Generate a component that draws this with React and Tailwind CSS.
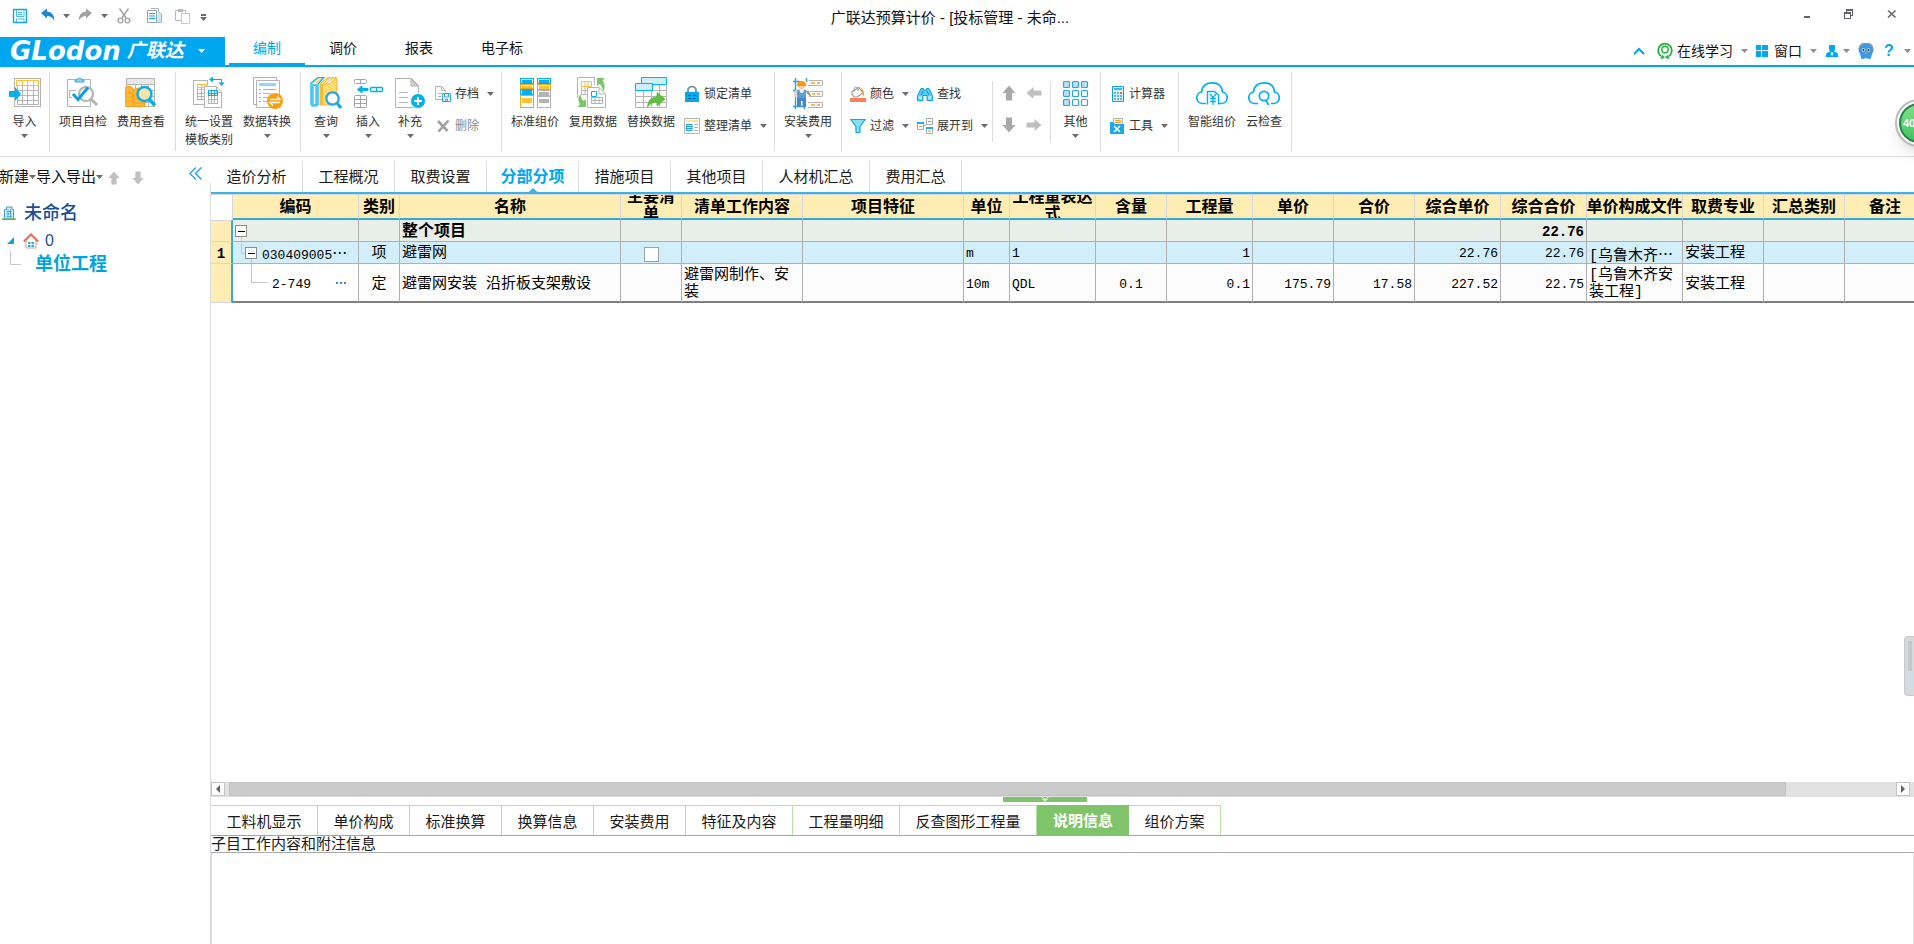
import React from "react";

const GRAY = "#b4b4b4";
const CYAN = "#00b0f0";
const GOLD = "#ffc233";

function Svg({ w = 32, h = 32, crisp, children }) {
  return (
    <svg width={w} height={h} viewBox={`0 0 ${w} ${h}`} fill="none" aria-hidden="true" className="block shrink-0" shapeRendering={crisp ? "crispEdges" : "auto"}>
      {children}
    </svg>
  );
}

function Caret({ color = "#6b6b78" }) {
  return (
    <svg width="7" height="4" viewBox="0 0 7 4" aria-hidden="true" className="block shrink-0">
      <path d="M0 0H7L3.5 4Z" fill={color} />
    </svg>
  );
}

/* ---------- ribbon icons, 32px ---------- */

const ImportIcon = () => (
  <Svg crisp>
    <path d="M5.500 1.500H31.500V29.500H5.500Z" stroke={GRAY} />
    <path d="M8.500 9V27.500H29.500V9M8.500 13.500H29M8.500 18.500H29M8.500 23.500H29M13.500 9V27M18.500 9V27M24.500 9V27" stroke={GRAY} />
    <path d="M7.500 3.500H29.500V8.500H7.500ZM13.500 3V8M18.500 3V8M24.500 3V8" stroke={GOLD} />
    <path d="M0 14H6V10L12 17L6 24V20H0Z" fill={CYAN} shapeRendering="auto" />
  </Svg>
);

const CheckIcon = () => (
  <Svg>
    <path d="M.5 2.500H23.500V29.500H.5Z" stroke={GRAY} />
    <path d="M8 5V3H10A2.600 2.600 0 0 1 15 3H17V5Z" fill="#8fd8f5" stroke="#3aa9d8" />
    <path d="M9 13.500H2.500V20.500H5" stroke={GRAY} />
    <circle cx="19" cy="17" r="7" stroke={GRAY} strokeWidth="2.200" fill="#fff" />
    <path d="M24 22L30 28" stroke={GRAY} strokeWidth="3" />
    <path d="M6 17L11 22.500L21 10.500" stroke="#0c9fe0" strokeWidth="3" />
  </Svg>
);

const FeeIcon = () => (
  <Svg>
    <path d="M1.500 1.500H29.500V29.500H1.500Z" stroke={GRAY} />
    <path d="M2 2H29V7H2Z" fill="#e9e9e9" />
    <path d="M1 7.500H30M8 13.500H29M8 19.500H29M8 25.500H29M10.500 8V29M16.500 8V29M23.500 8V29" stroke={GRAY} />
    <path d="M0 11Q4 7.500 8 11V29Q4 31 0 29Z" fill="#ffb833" stroke="#f5a11a" />
    <path d="M8 13Q14 9 20 13V29Q14 31 8 29Z" fill="#ffb833" stroke="#f5a11a" />
    <path d="M0 16H8M0 20H8M0 24H8M8 18H20M8 22H20M8 26H20" stroke="#f5a11a" />
    <circle cx="19.500" cy="17" r="7" fill="#ffe3a6" stroke={CYAN} strokeWidth="2.400" />
    <path d="M24.500 22.500L30 28.500" stroke={CYAN} strokeWidth="3.400" />
  </Svg>
);

const TemplateIcon = () => (
  <Svg crisp>
    <path d="M11 27.500H.5V3.500H14.500V8" stroke={GRAY} />
    <path d="M4.500 7.500H13.500V12.500H4.500ZM4 10.500H14M8.500 7V13M11.500 7V13" stroke={GOLD} />
    <path d="M4.500 13V23M4 16.500H11M4 19.500H11M4 22.500H11M8.500 13V23" stroke={GRAY} />
    <path d="M11.500 9.500H23.500L28.500 15V30.500H11.500Z" fill="#fff" stroke={GRAY} shapeRendering="auto" />
    <path d="M23.500 10V15.500H28" stroke={GRAY} />
    <path d="M15.500 13.500H24.500V18.500H15.500ZM15 16.500H25M18.500 13V19M21.500 13V19" stroke={CYAN} />
    <path d="M15.500 19V26.500H24.500V19M15 22.500H25M18.500 19V26M21.500 19V26" stroke={GRAY} />
    <path d="M18 2.500H28.500V6" stroke={CYAN} />
    <path d="M16 2.500L20 -.5V5.500ZM25.500 5.500H31.500L28.500 9Z" fill={CYAN} shapeRendering="auto" />
  </Svg>
);

const ConvertIcon = () => (
  <Svg>
    <path d="M5 27.500H2.500V.5H25.500V3" stroke={GRAY} />
    <path d="M5.500 3.500H28.500V30.500H5.500Z" stroke={GRAY} fill="#fff" />
    <path d="M8 6H25V9H8Z" fill="#8ddcf7" />
    <path d="M8 12.500H10M12 12.500H25M8 16.500H10M12 16.500H20M8 20.500H10M12 20.500H17M8 24.500H10M12 24.500H16" stroke={GRAY} />
    <circle cx="24" cy="24" r="8" fill="#fb9e0c" />
    <path d="M19 22.500H29L26 19.500M29 25.500H19L22 28.500" stroke="#fff" strokeWidth="1.500" />
  </Svg>
);

const QueryIcon = () => (
  <Svg>
    <path d="M1 6L8 .5H14L8 7V28L6 29H2L1 27Z" fill="#fff" stroke={CYAN} strokeWidth="1.200" />
    <path d="M1 7H8V27Q8 29 4.500 29T1 27Z" fill="#4cc6f2" />
    <path d="M4.500 9V27" stroke="#fff" strokeWidth="1.500" />
    <path d="M3 6L9 .8M6 6L12 .8" stroke="#f5a623" />
    <path d="M10 7L17 1H27V22L20 28H10Z" fill="#ffdc6b" stroke="#f7b52c" />
    <path d="M10 7H19L26 1H18Z" fill="#fff" stroke="#f7b52c" />
    <path d="M13 6.500L20 1M16 6.500L23 1" stroke="#f7b52c" />
    <path d="M10 7.500H13V28H10Z" fill="#f9bd35" />
    <circle cx="22.500" cy="21.500" r="6.200" fill="#fff" stroke="#1ea8e6" strokeWidth="2.200" />
    <path d="M27 26L31 31" stroke="#1ea8e6" strokeWidth="3.200" />
  </Svg>
);

const InsertIcon = () => (
  <Svg>
    <rect x="2.500" y="2.500" width="12" height="4" rx="1" stroke="#a4a4a4" />
    <path d="M8.500 2.500V6.500" stroke="#a4a4a4" />
    <path d="M16 11.500H10V9L5.500 12.500L10 16V13.500H16Z" fill={CYAN} stroke={CYAN} />
    <rect x="18.500" y="10.500" width="12" height="4" rx="1" stroke={CYAN} strokeWidth="1.400" />
    <path d="M24.500 10.500V14.500" stroke={CYAN} />
    <rect x="2.500" y="18.500" width="12" height="12" rx="1" stroke="#a4a4a4" />
    <path d="M8.500 18V30M2 22.500H15M2 26.500H15" stroke="#a4a4a4" />
  </Svg>
);

const AddPageIcon = () => (
  <Svg>
    <path d="M1.500 1.500H17.500L24.500 8.500V30.500H1.500Z" fill="#fff" stroke={GRAY} />
    <path d="M17 2V9H24Z" fill="#d0d0d0" stroke={GRAY} />
    <path d="M5 15.500H14M5 20.500H14M5 25.500H14" stroke={GRAY} />
    <circle cx="24" cy="24" r="7.500" fill={CYAN} stroke="#fff" />
    <path d="M20 24H28M24 20V28" stroke="#fff" strokeWidth="2" />
  </Svg>
);

const StandardIcon = () => (
  <Svg crisp>
    <path d="M1.500 1.500H14.500V6.500H1.500ZM18.500 1.500H31.500V6.500H18.500ZM1.500 12.500H14.500V17.500H1.500Z" stroke={CYAN} />
    <path d="M3 3H13V6H3ZM20 3H30V6H20ZM3 13H13V17H3Z" fill={CYAN} />
    <path d="M1.500 7.500H14.500V11.500H1.500ZM18.500 7.500H31.500V12.500H18.500ZM1.500 18.500H14.500V30.500H1.500Z" stroke="#f6a316" />
    <path d="M3 9H13V11H3ZM20 9H30V12H20ZM3 21H13V26H3Z" fill={GOLD} />
    <path d="M18.500 13.500H31.500V18.500H18.500ZM18.500 19.500H31.500V30.500H18.500Z" stroke={GRAY} />
    <path d="M20 15H30V18H20ZM20 22H30V26H20Z" fill={GRAY} />
  </Svg>
);

const ReuseIcon = () => (
  <Svg>
    <path d="M18 .5H.5V21M17.500 1V8" stroke={GRAY} />
    <path d="M4.500 4.500H14.500V9.500H4.500ZM8 4V9M11 4V9" stroke={GOLD} />
    <path d="M4.500 10V17.500H10M4 13.500H10M8 10V17" stroke={GRAY} />
    <path d="M10.500 10.500H22L28.500 17V30.500H10.500Z" fill="#fff" stroke={GRAY} />
    <path d="M22 10.500V17H28.500" stroke={GRAY} />
    <path d="M14.500 14.500H19.500V19.500H14.500Z" stroke={CYAN} />
    <path d="M14.500 20V26.500H25.500V20.500M14 20.500H26M14 23.500H26M18 20V26M22 20V26" stroke={GRAY} />
    <path d="M28 1H20V9L22.500 7Q25.500 9 26 15Q29.500 8 25.500 3.500Z" fill="#7cc46a" />
    <path d="M0 30H9V22L6.500 24Q4 22 3.500 17Q-.5 22 3 27.500Z" fill="#7cc46a" />
  </Svg>
);

const ReplaceIcon = () => (
  <Svg>
    <path d="M.5 13.500V30.500H31.500V8.500" stroke={GRAY} />
    <path d="M.5 19.500H31M.5 25.500H31M17 13.500H31M8.500 13V30M16.500 9V30M24.500 8V30" stroke={GRAY} />
    <path d="M6.500 .5H31.500V7.500H6.500Z" fill="#cdeffb" stroke={CYAN} />
    <path d="M.5 6.500H17.500V13.500H.5Z" fill="#cdeffb" stroke={CYAN} />
    <path d="M12.500 30Q13 20 22 20V15.500L30 22L22 29V25Q16 25 12.500 30Z" fill="#5cc43c" stroke="#45aa28" strokeWidth=".6" />
  </Svg>
);

const InstallIcon = () => (
  <Svg>
    <path d="M3.500 1V32M14.500 1V5M12.500 28V32M1 4.500H8M1 13.500H6M1 29.500H12" stroke="#22a9dc" strokeWidth="1.400" />
    <path d="M17 3.500H30.500V8.500H16M18 14.500H30.500V19.500H17M16 25.500H30.500V30.500H16" stroke={GRAY} />
    <path d="M19 6H23M25 6H28M20 17H23M25 17H28M19 28H23M25 28H28" stroke="#f6a316" strokeWidth="1.400" />
    <circle cx="9.500" cy="8.500" r="3.600" fill="#f6cba2" />
    <path d="M5 8Q5 4 9.500 4T14 8L15 9H5Z" fill="#fa981b" />
    <path d="M5 13Q9.500 11 14 13V22H5Z" fill="#5b9fd8" />
    <path d="M7 12L8.500 16H11L12.500 12Z" fill="#e9eef3" />
    <path d="M5 21H14V30H10.500V24H9V30H5Z" fill="#4a86c4" />
    <path d="M14 14L17.500 18M16 14L18.500 19" stroke="#9a9a9a" strokeWidth="1.600" />
    <path d="M4.500 13L3 20" stroke="#f6cba2" strokeWidth="2" />
  </Svg>
);

const OtherIcon = () => (
  <Svg>
    {[4, 13, 22].map((y) =>
      [4, 13, 22].map((x) => (
        <rect key={`${x}-${y}`} x={x - 0.5} y={y + 0.5} width="6" height="6" rx="1" stroke="#22aadd" strokeWidth="1.200" fill={x === 4 || y === 4 ? "#c2dcf2" : "#fff"} />
      ))
    )}
  </Svg>
);

const CLOUD = "M10 26.500H6.500A5.800 5.800 0 0 1 5.500 15Q6.500 6 16 5.800T26.500 15A5.800 5.800 0 0 1 25.500 26.500H23";

const CloudPriceIcon = () => (
  <Svg>
    <path d={CLOUD} stroke={CYAN} strokeWidth="1.700" />
    <path d="M11.500 27.500V14.500H18.500L22.500 18V27.500" stroke={CYAN} strokeWidth="1.400" />
    <path d="M14 17L17 20.500L20 17M17 20.500V28M14 21.500H20M14 24.500H20" stroke={CYAN} strokeWidth="1.300" />
  </Svg>
);

const CloudCheckIcon = () => (
  <Svg>
    <path d={CLOUD} stroke={CYAN} strokeWidth="1.700" />
    <circle cx="16" cy="19" r="4.700" stroke={CYAN} strokeWidth="1.700" />
    <path d="M18 23L20.500 28" stroke={CYAN} strokeWidth="1.700" />
  </Svg>
);

/* ---------- small icons, 16px ---------- */

const ArchiveIcon = () => (
  <Svg w={16} h={16}>
    <path d="M7 13.500H.5V.5H6.500L10.500 4.500V6M6.500 .5V4.500H10.500M3 7.500H7M3 10.500H6" stroke={GRAY} />
    <path d="M7.500 7.500H15.500V15.500H7.500Z" fill="#fff" stroke="#2ca5d8" />
    <path d="M9.500 8V11H13.500V8M10.500 15V13H12.500V15" stroke="#2ca5d8" />
  </Svg>
);
const DeleteIcon = () => (
  <Svg w={16} h={16}>
    <path d="M3 3L12.500 13M13.500 2.500L3.500 13.500" stroke="#a0a0a0" strokeWidth="2.600" />
  </Svg>
);
const LockIcon = () => (
  <Svg w={16} h={16}>
    <path d="M4 7V4.500A4 4 0 0 1 12 4.500V7" stroke="#8494a0" strokeWidth="2" />
    <path d="M1 6H15V16H1Z" fill="#05a9ee" />
    <path d="M4 9.500H7M9 9.500H12M4 12.500H7M9 12.500H12" stroke="#0b5d94" strokeWidth="1.200" />
  </Svg>
);
const ArrangeIcon = () => (
  <Svg w={16} h={16}>
    <path d="M.5 .5H15.500V15.500H.5Z" stroke={GRAY} />
    <path d="M2 2H14V4H2Z" fill="#ffe3a0" />
    <path d="M2.500 6.500H8V12.500H2.500ZM3 8.500H8M3 10.500H8" stroke="#159fda" />
    <path d="M10 6.500H14M10 9.500H14M10 12.500H14" stroke={GRAY} />
  </Svg>
);
const ColorIcon = () => (
  <Svg w={16} h={16}>
    <path d="M2 5.500L9 1.500L13 7L7 11H4L2 8Z" fill="#fff" stroke="#9b9b9b" strokeWidth="1.200" />
    <path d="M4 6V2.500Q5.500 -.5 8 2.500V5" stroke="#9b9b9b" />
    <path d="M11 2Q15 4 13.500 11Q12.500 8 12 6Z" fill="#f39b24" />
    <path d="M0 12H16V16H0Z" fill="#ff7f56" />
  </Svg>
);
const FilterIcon = () => (
  <Svg w={16} h={16}>
    <path d="M.8 1.500H15.200L10 8.500V14.500H6V8.500Z" fill="#8bdcf7" stroke="#12a6e4" strokeWidth="1.200" />
  </Svg>
);
const FindIcon = () => (
  <Svg w={16} h={16}>
    <path d="M4 2.500H6.500V4H9.500V2.500H12L15.500 9.500V14.500H10V9.500H6V14.500H.5V9.500Z" fill="#54cdf5" stroke="#159fda" />
    <path d="M6 5L4 9M10 5L12 9" stroke="#0f8fc6" />
    <path d="M1.500 10H5V13.500H1.500ZM11 10H14.500V13.500H11Z" fill="#a4e8fc" />
  </Svg>
);
const ExpandIcon = () => (
  <Svg w={16} h={16}>
    <path d="M.5 4.500H6.500V11.500H.5ZM9.500 .5H15.500V6.500H9.500ZM9.500 9.500H15.500V15.500H9.500Z" stroke="#a9a9a9" fill="#fff" />
    <path d="M0 4H7V6H0ZM9 9H16V11H9Z" fill="#19aaf0" />
    <path d="M2 8.500H5M11 3.500H14M11 13H14" stroke="#c59a4a" />
    <path d="M7 7.500H9" stroke="#a9a9a9" />
  </Svg>
);
const CalculatorIcon = () => (
  <Svg w={16} h={16}>
    <path d="M3.500 .5H14.500V15.500H3.500Z" fill="#d4f1fc" stroke="#159fda" />
    <path d="M5 3H13" stroke="#159fda" strokeWidth="1.500" />
    <path d="M5 7H7M8 7H10M5 10H7M8 10H10M11 10H13M5 13H7M8 13H10M11 13H13" stroke="#4a9fc8" strokeWidth="1.400" />
    <path d="M11 6H13V8H11Z" fill="#ff5548" />
  </Svg>
);
const ToolIcon = () => (
  <Svg w={16} h={16}>
    <path d="M4.500 .5H13.500V7H4.500Z" fill="#fff" stroke={GRAY} />
    <path d="M6 2.500H12M6 4.500H12" stroke="#f2ab2c" strokeWidth="1.400" />
    <path d="M1 4H4L6 6H15V16H1Z" fill="#18a9ec" />
    <path d="M5 8L11 14M11 8L5 14" stroke="#fff" strokeWidth="1.500" />
  </Svg>
);

function Arrow({ dir, color = "#b4b4b4", w = 16 }) {
  const d = {
    up: "M8 .5L14.500 8H11V15.500H5V8H1.500Z",
    down: "M8 15.500L14.500 8H11V.5H5V8H1.500Z",
    left: "M.5 8L7.500 2V5.500H15.500V10.500H7.500V14Z",
    right: "M15.500 8L8.500 2V5.500H.5V10.500H8.500V14Z",
  }[dir];
  return (
    <svg width={w} height={w} viewBox="0 0 16 16" aria-hidden="true" className="block shrink-0">
      <path d={d} fill={color} />
    </svg>
  );
}

/* ---------- title bar ---------- */

const quickButton = "flex h-full w-7 items-center justify-center";
const quickCaret = "flex h-full w-2.5 items-center justify-center";

function TitleBar() {
  return (
    <header className="flex h-[37px] shrink-0 items-start">
      <div className="flex h-8 w-[210px] shrink-0 pl-1.5">
        <button aria-label="保存" className={quickButton}>
          <Svg w={16} h={16}>
            <path d="M1.500 1.500H14.500V14.500H1.500Z" stroke="#12a6e4" strokeWidth="1.400" />
            <path d="M4.500 2V8.500H12V2M4.500 14V11H12V14M6 4.500H10.500M6 6.500H10.500" stroke="#4cbce6" />
          </Svg>
        </button>
        <button aria-label="撤销" className={quickButton}>
          <Svg w={16} h={16}>
            <path d="M1 5L7 .5V3.500Q14.500 4 14.500 13.500Q12.500 8 7 8V10.500Z" fill="#1e86d0" />
          </Svg>
        </button>
        <button aria-label="撤销列表" className={quickCaret}><Caret /></button>
        <button aria-label="重做" className={quickButton}>
          <Svg w={16} h={16}>
            <path d="M15 5L9 .5V3.500Q1.500 4 1.500 13.500Q3.500 8 9 8V10.500Z" fill="#a2a2a2" />
          </Svg>
        </button>
        <button aria-label="重做列表" className={quickCaret}><Caret /></button>
        <button aria-label="剪切" className="flex h-full w-[30px] items-center justify-center">
          <Svg w={16} h={16}>
            <path d="M3.500 .5L10 10M12.500 .5L6 10" stroke="#a2a2a2" strokeWidth="1.500" />
            <circle cx="4.500" cy="12.500" r="2.400" stroke="#a2a2a2" strokeWidth="1.300" />
            <circle cx="11.500" cy="12.500" r="2.400" stroke="#a2a2a2" strokeWidth="1.300" />
          </Svg>
        </button>
        <button aria-label="复制" className="flex h-full w-[30px] items-center justify-center">
          <Svg w={16} h={16}>
            <path d="M5 .5H12.500V12.500H5" stroke={GRAY} />
            <path d="M12 3L15.500 6.500V14.500H11" fill="#bfe9fa" stroke={GRAY} />
            <path d="M1.500 2.500H10.500V14.500H1.500Z" fill="#fff" stroke="#8fa6b2" />
            <path d="M3 5.500H9M3 8H9M3 10.500H9" stroke="#12a6e4" />
          </Svg>
        </button>
        <button aria-label="粘贴" className={quickButton}>
          <Svg w={16} h={16}>
            <path d="M7 12.500H1.500V2.500H11.500V5" stroke="#b8b8b8" />
            <path d="M4 1H9V4H4Z" fill="#b8b8b8" />
            <path d="M7.500 5.500H15.500V15.500H7.500Z" fill="#fff" stroke="#c8c8c8" />
          </Svg>
        </button>
        <button aria-label="自定义快速访问" className="flex h-full w-3.5 flex-col items-center justify-center gap-px pt-0.5">
          <span className="h-0.5 w-[5px] bg-[#6b6b78]" />
          <Caret />
        </button>
      </div>
      <h1 className="min-w-0 flex-1 truncate pt-2 text-center text-[15px] leading-5 text-[#111]">广联达预算计价 - [投标管理 - 未命...</h1>
      <div className="flex h-7 w-[224px] shrink-0 justify-end text-[#62626c]">
        <button aria-label="最小化" className="flex w-[42px] items-center justify-center pt-1.5">
          <span className="h-[2px] w-1.5 bg-[#62626c]" />
        </button>
        <button aria-label="还原" className="flex w-[42px] items-center justify-center">
          <Svg w={10} h={10} crisp>
            <path d="M2.500 3V.5H8.500V6.500H7M.5 3.500H6.500V9.500H.5ZM2 1.500H9M0 4.500H7" stroke="#62626c" />
          </Svg>
        </button>
        <button aria-label="关闭" className="flex w-[44px] items-center justify-center">
          <Svg w={10} h={10}>
            <path d="M1 1.500L8.500 8.500M8.500 1.500L1 8.500" stroke="#62626c" strokeWidth="1.500" />
          </Svg>
        </button>
      </div>
    </header>
  );
}

/* ---------- menu bar ---------- */

const menuTabs = [
  { label: "编制", active: true },
  { label: "调价" },
  { label: "报表" },
  { label: "电子标" },
];

function MenuBar() {
  return (
    <nav className="flex h-[30px] shrink-0 border-b-2 border-[#00a6ee]">
      <button className="mr-1 flex w-[225px] shrink-0 items-center bg-[#00a6ee] pl-2.5 text-white">
        <span className="font-['DejaVu_Sans',sans-serif] text-[26px] leading-7 font-bold italic">GLodon</span>
        <span className="ml-1.5 text-[19px] leading-7 font-bold italic">广联达</span>
        <span className="ml-3.5"><Caret color="#fff" /></span>
      </button>
      {menuTabs.map((t) => (
        <a
          key={t.label}
          href="#"
          className={
            t.active
              ? "border-b-2 border-[#00a6ee] px-6 text-sm leading-[22px] text-[#00a6ee]"
              : "px-6 text-sm leading-[22px] text-[#111]"
          }
        >
          {t.label}
        </a>
      ))}
      <div className="ml-auto flex items-center gap-2 pr-[3px] text-sm leading-5 text-[#111]">
        <button aria-label="折叠功能区" className="pr-1">
          <Svg w={12} h={8}>
            <path d="M1 7L6 2L11 7" stroke="#00a6ee" strokeWidth="2" />
          </Svg>
        </button>
        <button className="flex items-center gap-1">
          <Svg w={16} h={16}>
            <circle cx="8" cy="7.500" r="6.800" stroke="#22ac38" strokeWidth="1.800" />
            <circle cx="8" cy="6.500" r="3.200" stroke="#22ac38" strokeWidth="1.400" />
            <path d="M3 16L5 11.500L8 14L11 11.500L13 16H10L8 14L6 16Z" fill="#22ac38" stroke="#fff" strokeWidth=".6" />
          </Svg>
          在线学习
        </button>
        <Caret color="#8c8c96" />
        <button className="flex items-center gap-1.5">
          <Svg w={12} h={12} crisp>
            <path d="M0 0H5V5H0ZM6 0H12V5H6ZM0 6H5V12H0ZM6 6H12V12H6Z" fill="#00a6ee" />
          </Svg>
          窗口
        </button>
        <Caret color="#8c8c96" />
        <button aria-label="用户" className="flex items-center gap-1">
          <Svg w={14} h={14}>
            <path d="M4 1H10V5.500L9 7.500L12.500 9L13.500 13H.5L1.500 9L5 7.500L4 5.500Z" fill="#00a6ee" />
            <path d="M5.500 8.500L7 12.500L8.500 8.500" fill="#fff" />
          </Svg>
          <Caret color="#8c8c96" />
        </button>
        <button aria-label="助手">
          <Svg w={16} h={16}>
            <path d="M.5 7.500A7.500 7 0 0 1 15.500 7.500L13.500 12.500Q12 15.500 8 15.500T2.500 12.500Z" fill="#3a9ae8" />
            <path d="M3.500 13L5 16M12.500 13L11 16" stroke="#3a9ae8" strokeWidth="2.400" />
            <path d="M1 6A7 6 0 0 1 15 6" stroke="#8899aa" strokeWidth="1.400" />
            <circle cx="5.500" cy="7" r="1.800" fill="#d8ecff" />
            <circle cx="10.500" cy="7" r="1.800" fill="#d8ecff" />
            <circle cx="5.500" cy="7" r="1" fill="#1b2b3d" />
            <circle cx="10.500" cy="7" r="1" fill="#1b2b3d" />
            <path d="M6.800 9.500H9.200L8 11.500Z" fill="#ffb020" />
          </Svg>
        </button>
        <button aria-label="帮助" className="w-3.5 text-center text-base font-bold text-[#00a6ee]">?</button>
        <Caret color="#8c8c96" />
      </div>
    </nav>
  );
}

/* ---------- ribbon ---------- */

const W = { sm: "w-[42px]", md: "w-[46px]", full: "w-[49px]", lg: "w-[58px]" };

function BigButton({ icon, label, label2, caret, size = "lg" }) {
  return (
    <button className={`${W[size]} flex shrink-0 flex-col items-center pt-[5px] text-xs leading-[18px] whitespace-nowrap text-[#333]`}>
      {icon}
      <span className="mt-1">{label}</span>
      {label2 && <span>{label2}</span>}
      {caret && <span className="mt-[3px]"><Caret /></span>}
    </button>
  );
}

function SmallButton({ icon, label, caret, muted }) {
  return (
    <button className={`flex h-8 items-center px-1 text-xs whitespace-nowrap ${muted ? "text-[#8a8a8a]" : "text-[#333]"}`}>
      {icon}
      <span className="ml-1">{label}</span>
      {caret && <span className="ml-2"><Caret /></span>}
    </button>
  );
}

function Group({ pad = "px-1", children }) {
  return <div className={`${pad} flex shrink-0 border-r border-[#dcdcdc]`}>{children}</div>;
}

function Column({ children }) {
  return <div className="flex flex-col pt-1.5">{children}</div>;
}

function Ribbon() {
  return (
    <section aria-label="功能区" className="flex h-[90px] shrink-0 border-b border-[#dcdcdc] py-[5px]">
      <Group pad="p-0">
        <BigButton icon={<ImportIcon />} label="导入" caret size="full" />
      </Group>
      <Group pad="pr-[5px] pl-1">
        <BigButton icon={<CheckIcon />} label="项目自检" />
        <BigButton icon={<FeeIcon />} label="费用查看" />
      </Group>
      <Group>
        <BigButton icon={<TemplateIcon />} label="统一设置" label2="模板类别" />
        <BigButton icon={<ConvertIcon />} label="数据转换" caret />
      </Group>
      <Group pad="pr-[3px] pl-1">
        <BigButton icon={<QueryIcon />} label="查询" caret size="sm" />
        <BigButton icon={<InsertIcon />} label="插入" caret size="sm" />
        <BigButton icon={<AddPageIcon />} label="补充" caret size="sm" />
        <Column>
          <SmallButton icon={<ArchiveIcon />} label="存档" caret />
          <SmallButton icon={<DeleteIcon />} label="删除" muted />
        </Column>
      </Group>
      <Group pad="pr-[3px] pl-1">
        <BigButton icon={<StandardIcon />} label="标准组价" />
        <BigButton icon={<ReuseIcon />} label="复用数据" />
        <BigButton icon={<ReplaceIcon />} label="替换数据" />
        <Column>
          <SmallButton icon={<LockIcon />} label="锁定清单" />
          <SmallButton icon={<ArrangeIcon />} label="整理清单" caret />
        </Column>
      </Group>
      <Group>
        <BigButton icon={<InstallIcon />} label="安装费用" caret />
      </Group>
      <Group pad="pl-1">
        <Column>
          <SmallButton icon={<ColorIcon />} label="颜色" caret />
          <SmallButton icon={<FilterIcon />} label="过滤" caret />
        </Column>
        <Column>
          <SmallButton icon={<FindIcon />} label="查找" />
          <SmallButton icon={<ExpandIcon />} label="展开到" caret />
        </Column>
        <div className="my-[9px] grid w-[59px] grid-cols-2 content-start justify-items-center gap-y-4 border-x border-[#dcdcdc] px-1 pt-1">
          <button aria-label="上移"><Arrow dir="up" color="#a8a8a8" /></button>
          <button aria-label="左移"><Arrow dir="left" color="#c0c0c0" /></button>
          <button aria-label="下移"><Arrow dir="down" color="#a8a8a8" /></button>
          <button aria-label="右移"><Arrow dir="right" color="#c0c0c0" /></button>
        </div>
        <BigButton icon={<OtherIcon />} label="其他" caret size="full" />
      </Group>
      <div className="flex w-[78px] shrink-0 border-r border-[#dcdcdc] pl-1">
        <Column>
          <SmallButton icon={<CalculatorIcon />} label="计算器" />
          <SmallButton icon={<ToolIcon />} label="工具" caret />
        </Column>
      </div>
      <Group>
        <BigButton icon={<CloudPriceIcon />} label="智能组价" />
        <BigButton icon={<CloudCheckIcon />} label="云检查" size="md" />
      </Group>
    </section>
  );
}

/* ---------- project tree ---------- */

function ProjectTree() {
  return (
    <aside className="flex w-[211px] shrink-0 flex-col">
      <div className="-ml-px flex h-[26px] items-start pt-2.5 text-[15px] leading-5 text-[#111]">
        <button className="flex items-center whitespace-nowrap">新建<Caret /></button>
        <button className="flex items-center whitespace-nowrap">导入导出<Caret /></button>
        <button aria-label="上移" className="ml-1 pt-1"><Arrow dir="up" color="#c0c0c0" w={14} /></button>
        <button aria-label="下移" className="ml-2.5 pt-1"><Arrow dir="down" color="#c0c0c0" w={14} /></button>
        <button aria-label="收起" className="ml-auto pr-2">
          <Svg w={14} h={14}>
            <path d="M7 .5L1 6.500L7 12.500M12.500 .5L6.500 6.500L12.500 12.500" stroke="#2fa5d8" strokeWidth="1.500" />
          </Svg>
        </button>
      </div>
      <ul className="flex-1 border-r border-[#dcdcdc] pt-4">
        <li className="flex h-7 items-center gap-2 pl-0.5">
          <Svg w={14} h={14}>
            <path d="M2.500 13V3.500H4.500V1H10V3.500H11.500V13Z" fill="#d8f0fb" stroke="#3b9fd4" />
            <path d="M4.500 5.500H10M4.500 8H10M4.500 10.500H10M6 3V12M8.500 3V12" stroke="#3b9fd4" strokeWidth=".8" />
            <path d="M0 13.200H14" stroke="#5fb548" strokeWidth="1.500" />
          </Svg>
          <a href="#" className="text-[18px] leading-6 font-medium text-[#1c4e94]">未命名</a>
        </li>
        <li className="flex h-7 items-center pl-[7px]">
          <Svg w={8} h={8}><path d="M7 0V7H0Z" fill="#14a4e6" /></Svg>
          <span className="ml-2">
            <Svg w={16} h={16}>
              <path d="M3 7V15H13V7" fill="#fff" stroke="#b8a8a0" />
              <path d="M.8 8.500L8 1.500L15.200 8.500" stroke="#f26b4e" strokeWidth="2" />
              <path d="M5 9H7.500V11H5ZM8.500 9H11V11H8.500ZM5 12H7.500V14H5ZM8.500 12H11V14H8.500Z" fill="#2fa8e4" />
            </Svg>
          </span>
          <a href="#" className="ml-1.5 text-base leading-6 text-[#1c4e94]">0</a>
        </li>
        <li className="flex h-[18px] items-center pl-2.5">
          <span className="mb-3 h-[14px] w-[11px] border-b border-l border-[#c8c8c8]" />
          <a href="#" className="ml-[14px] text-[18px] leading-6 font-bold text-[#00a4dc]">单位工程</a>
        </li>
      </ul>
    </aside>
  );
}

/* ---------- module tabs ---------- */

const moduleTabs = ["造价分析", "工程概况", "取费设置", "分部分项", "措施项目", "其他项目", "人材机汇总", "费用汇总"];

function ModuleTabs() {
  return (
    <nav className="flex h-[37px] shrink-0 border-b-2 border-[#3bb3e3] pt-1">
      {moduleTabs.map((t) => {
        const width = t.length === 5 ? "w-[107px]" : "w-[92px]";
        const active = t === "分部分项";
        return (
          <a
            key={t}
            href="#"
            className={`${width} relative border-r border-[#dcdcdc] text-center ${active ? "text-base leading-[31px] font-bold text-[#00a6ee]" : "text-[15px] leading-[32px] text-[#1a1a1a]"}`}
          >
            {t}
            {active && (
              <svg width="9" height="4" viewBox="0 0 9 4" aria-hidden="true" className="absolute bottom-0 left-1/2 -translate-x-1/2">
                <path d="M4.500 0L9 4H0Z" fill="#3bb3e3" />
              </svg>
            )}
          </a>
        );
      })}
    </nav>
  );
}

/* ---------- bill table ---------- */

const columns = [
  ["编码", "w-[126px]"],
  ["类别", "w-[41px]"],
  ["名称", "w-[221px]"],
  ["主要清单", "w-[61px]"],
  ["清单工作内容", "w-[121px]"],
  ["项目特征", "w-[161px]"],
  ["单位", "w-[46px]"],
  ["工程量表达式", "w-[86px]"],
  ["含量", "w-[71px]"],
  ["工程量", "w-[86px]"],
  ["单价", "w-[81px]"],
  ["合价", "w-[81px]"],
  ["综合单价", "w-[86px]"],
  ["综合合价", "w-[86px]"],
  ["单价构成文件", "w-[96px]"],
  ["取费专业", "w-[81px]"],
  ["汇总类别", "w-[81px]"],
  ["备注", "w-[81px]"],
];

const HEAD_FIT = {
  主要清单: "leading-[17px]",
  工程量表达式: "leading-[17px]",
  单价构成文件: "pt-[3px] whitespace-nowrap",
};

const CELL = "border-r border-b border-[#b0b0b0] px-0.5 pt-[3px] pb-0 leading-4";
const LAST = "border-r border-b-2 border-r-[#b0b0b0] border-b-[#808080] px-0.5 pt-[3px] pb-0";
const NUM = "text-right text-[13px]";
const LINE = "#c8c8c8";

function BillTable() {
  return (
    <div className="min-h-0 flex-1 overflow-hidden">
      <table className="w-[1715px] table-fixed border-separate border-spacing-0 font-['Liberation_Mono','Noto_Sans_CJK_SC',monospace] text-[15px] leading-[17px] text-black">
        <colgroup>
          <col className="w-[22px]" />
          {columns.map(([name, w]) => <col key={name} className={w} />)}
        </colgroup>
        <thead>
          <tr className="h-[26px]">
            <th className="border-t border-r border-[#d6d6de] bg-white p-0" />
            {columns.map(([name]) => (
              <th key={name} scope="col" className="border-t border-r border-b-2 border-[#d6d6de] border-b-[#35a8d8] bg-[#ffedb3] p-0 text-base leading-4 font-bold">
                <span className={`flex h-[23px] items-center justify-center overflow-hidden ${HEAD_FIT[name] ?? "pt-[3px]"}`}>{name}</span>
              </th>
            ))}
          </tr>
        </thead>
        <tbody>
          <tr className="h-[22px] bg-[#e8eee9]">
            <td className="border-t border-r-2 border-b border-[#d6d6de] border-r-[#35a8d8] bg-[#ffedb3]" />
            <td className="border-r border-b border-[#b0b0b0] p-0">
              <Svg w={24} h={21} crisp>
                <path d="M8.500 17V21" stroke={LINE} />
                <path d="M2.500 5.500H13.500V16.500H2.500Z" fill="#fff" stroke="#8c8c8c" />
                <path d="M5 11.500H12" stroke="#000" />
              </Svg>
            </td>
            <td className={CELL} />
            <td className={`${CELL} text-[16px] font-bold`}>整个项目</td>
            {Array.from({ length: 10 }, (_, i) => <td key={i} className={CELL} />)}
            <td className={`${CELL} text-right text-[14px] font-bold`}>22.76</td>
            {Array.from({ length: 4 }, (_, i) => <td key={i} className={CELL} />)}
          </tr>
          <tr className="h-[22px] bg-[#d2eefa]">
            <th scope="row" className="border-r-2 border-b border-[#d6d6de] border-r-[#35a8d8] bg-[#ffedb3] p-0 pt-[3px] text-[14px] leading-4 font-bold">1</th>
            <td className="border-r border-b border-[#b0b0b0] p-0">
              <span className="flex h-[21px] items-center">
                <Svg w={29} h={21} crisp>
                  <path d="M8.500 0V11.500H12M18.500 17V21" stroke={LINE} />
                  <path d="M12.500 5.500H23.500V16.500H12.500Z" fill="#fff" stroke="#8c8c8c" />
                  <path d="M15 11.500H22" stroke="#000" />
                </Svg>
                <span lang="zh-CN" className="pt-[3px] leading-4 whitespace-nowrap">
                  <span className="text-[13px]">030409005</span>
                  <span className="font-['Noto_Sans_CJK_SC',sans-serif]">⋯</span>
                </span>
              </span>
            </td>
            <td className={`${CELL} text-center`}>项</td>
            <td className={CELL}>避雷网</td>
            <td className={CELL}>
              <input type="checkbox" aria-label="主要清单" className="mx-auto block size-[15px] appearance-none border border-[#a0a0a0] bg-white" />
            </td>
            <td className={CELL} />
            <td className={CELL} />
            <td className={`${CELL} text-[13px]`}>m</td>
            <td className={`${CELL} text-[13px]`}>1</td>
            <td className={CELL} />
            <td className={`${CELL} ${NUM}`}>1</td>
            <td className={CELL} />
            <td className={CELL} />
            <td className={`${CELL} ${NUM}`}>22.76</td>
            <td className={`${CELL} ${NUM}`}>22.76</td>
            <td className={CELL}>
              <span className="block h-4 whitespace-nowrap">[乌鲁木齐<span className="font-['Noto_Sans_CJK_SC',sans-serif]">⋯</span></span>
            </td>
            <td className={CELL}>安装工程</td>
            <td className={CELL} />
            <td className={CELL} />
          </tr>
          <tr className="h-[39px] bg-[#fcfcfc]">
            <td className="border-r-2 border-b border-[#d6d6de] border-r-[#35a8d8] bg-[#ffedb3]" />
            <td className="border-r border-b-2 border-r-[#b0b0b0] border-b-[#808080] bg-white p-0">
              <span className="flex items-center text-[13px]">
                <Svg w={39} h={37} crisp>
                  <path d="M18.500 0V18.500H35" stroke={LINE} />
                </Svg>
                <span className="pt-[3px]">2-749</span>
                <button aria-label="更多" className="mr-3 ml-auto">
                  <Svg w={10} h={2} crisp><path d="M0 0H2V2H0ZM4 0H6V2H4ZM8 0H10V2H8Z" fill="#3c88c8" /></Svg>
                </button>
              </span>
            </td>
            <td className={`${LAST} text-center`}>定</td>
            <td className={LAST}>避雷网安装 沿折板支架敷设</td>
            <td className={LAST} />
            <td className={LAST}>避雷网制作、安装</td>
            <td className={LAST} />
            <td className={`${LAST} text-[13px]`}>10m</td>
            <td className={`${LAST} text-[13px]`}>QDL</td>
            <td className={`${LAST} text-center text-[13px]`}>0.1</td>
            <td className={`${LAST} ${NUM}`}>0.1</td>
            <td className={`${LAST} ${NUM}`}>175.79</td>
            <td className={`${LAST} ${NUM}`}>17.58</td>
            <td className={`${LAST} ${NUM}`}>227.52</td>
            <td className={`${LAST} ${NUM}`}>22.75</td>
            <td className={LAST}>[乌鲁木齐安装工程]</td>
            <td className={LAST}>安装工程</td>
            <td className={LAST} />
            <td className={LAST} />
          </tr>
        </tbody>
      </table>
    </div>
  );
}

/* ---------- detail panel ---------- */

const detailTabs = ["工料机显示", "单价构成", "标准换算", "换算信息", "安装费用", "特征及内容", "工程量明细", "反查图形工程量", "说明信息", "组价方案"];
const detailWidth = { 4: "w-[92px]", 5: "w-[107px]", 7: "w-[137px]" };

function DetailPanel() {
  return (
    <section aria-label="明细" className="shrink-0">
      <div className="flex h-[15px] items-start bg-[#e1e1e1]">
        <button aria-label="向左滚动" className="mr-1 flex h-[14px] w-[14px] items-center justify-center border border-[#c4c4c4] bg-white">
          <Svg w={4} h={8}><path d="M4 0V8L0 4Z" fill="#62626c" /></Svg>
        </button>
        <div className="flex flex-1">
          <div className="h-[14px] flex-1 border border-[#c2c2c2] bg-[#cbcbcb]" />
          <div className="w-[110px] shrink-0" />
        </div>
        <button aria-label="向右滚动" className="mr-1 flex h-[14px] w-[14px] items-center justify-center border border-[#c4c4c4] bg-white">
          <Svg w={4} h={8}><path d="M0 0V8L4 4Z" fill="#62626c" /></Svg>
        </button>
      </div>
      <div className="flex h-2 items-start justify-center pr-9">
        <button aria-label="收起明细" className="flex h-[5px] w-[84px] items-center justify-center bg-[#7fc36a]">
          <Svg w={8} h={5}>
            <path d="M.5 0L4 2.500L7.500 0M1.500 2L4 4.500L6.500 2" stroke="#fff" />
          </Svg>
        </button>
      </div>
      <nav className="flex h-[31px] border-b border-[#7fc36a] text-[15px]">
        {detailTabs.map((t) =>
          t === "说明信息" ? (
            <a key={t} href="#" className="w-[92px] bg-[#7fc36a] text-center leading-[31px] font-bold text-white">{t}</a>
          ) : (
            <a key={t} href="#" className={`${detailWidth[t.length]} border-t border-r border-[#b5e3a2] text-center leading-[32px] text-[#1a1a1a]`}>{t}</a>
          )
        )}
      </nav>
      <label htmlFor="note" className="block h-[17px] border-b border-[#a9a9b2] text-[15px] leading-4 text-[#1a1a1a]">子目工作内容和附注信息</label>
      <textarea id="note" readOnly className="block h-[91px] w-full resize-none border-x border-[#dedee6] bg-white outline-none" />
    </section>
  );
}

export default function App() {
  return (
    <div className="relative flex h-screen flex-col overflow-hidden bg-white font-['Liberation_Sans','Noto_Sans_CJK_SC',sans-serif]">
      <TitleBar />
      <MenuBar />
      <Ribbon />
      <div className="flex min-h-0 flex-1">
        <ProjectTree />
        <main className="flex min-w-0 flex-1 flex-col">
          <ModuleTabs />
          <BillTable />
          <DetailPanel />
        </main>
      </div>
      <div className="absolute top-[99px] -right-[29px] size-12 rounded-full border-2 border-[#b9bcbb] bg-white p-0.5 shadow-lg">
        <div className="flex size-full items-center rounded-full border-2 border-[#1f8a4c] bg-linear-to-b from-[#7fe08a] to-[#3fc45c] pl-0.5 text-[11px] font-bold text-white">40</div>
      </div>
      <div className="absolute top-[636px] right-0 flex h-[60px] w-2.5 justify-center rounded-l-sm border border-r-0 border-[#c9cacb] bg-[#d6d8d9] py-1">
        <div className="flex w-1 flex-col justify-end bg-[#c6c8ca]">
          <div className="h-5 bg-[#cbdfe6]" />
        </div>
      </div>
    </div>
  );
}
